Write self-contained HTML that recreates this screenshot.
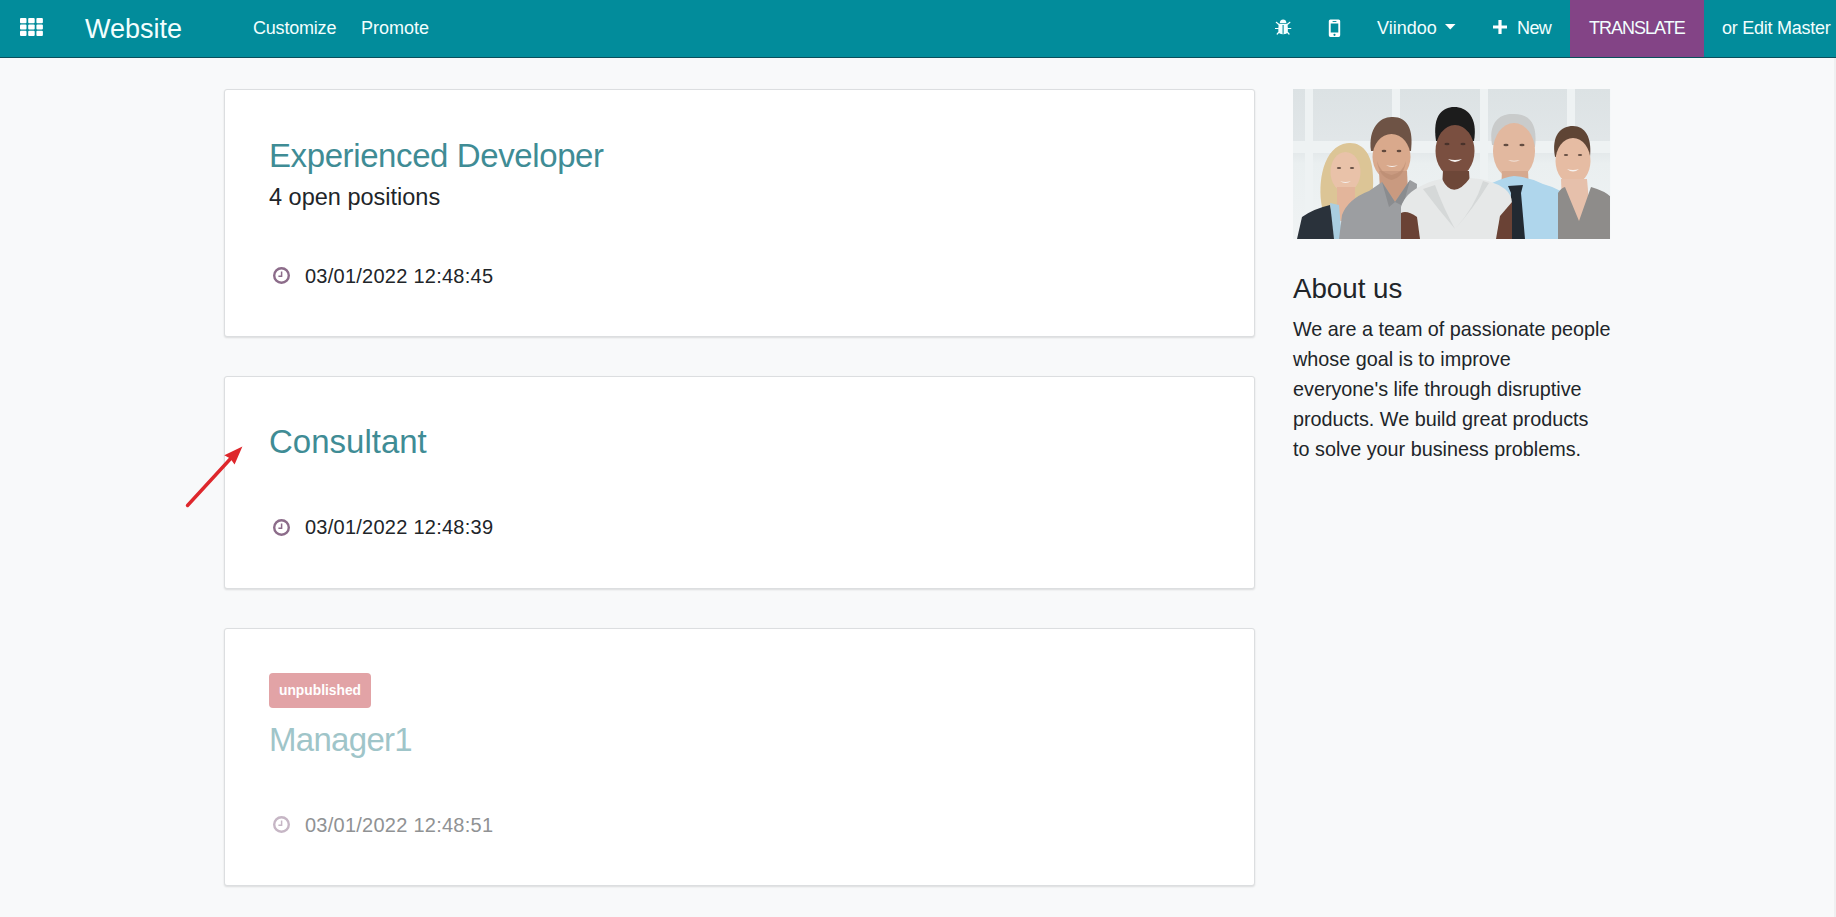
<!DOCTYPE html>
<html>
<head>
<meta charset="utf-8">
<style>
html,body{margin:0;padding:0;}
body{width:1836px;height:917px;overflow:hidden;background:#f8f9fa;font-family:"Liberation Sans",sans-serif;position:relative;}
.a{position:absolute;white-space:nowrap;line-height:1;}
#nav{position:absolute;left:0;top:0;width:1836px;height:57px;background:#028c9b;border-bottom:1px solid #0a4f5c;}
.nt{color:#f2fefe;font-size:18px;}
.card{position:absolute;left:224px;width:1029px;background:#fff;border:1px solid #dcdee0;border-radius:3px;box-shadow:0 1px 2px rgba(0,0,0,.12);}
.title{color:#3f8c95;font-size:33px;}
.date{color:#212529;font-size:20px;letter-spacing:0.25px;}
.para{color:#212529;font-size:19.8px;}
</style>
</head>
<body>
<div id="nav">
  <!-- apps grid -->
  <svg class="a" style="left:20px;top:18px" width="23" height="18" viewBox="0 0 23 18">
    <g fill="#fff">
      <rect x="0" y="0" width="6.5" height="5.2" rx="1"/><rect x="8.2" y="0" width="6.5" height="5.2" rx="1"/><rect x="16.4" y="0" width="6.5" height="5.2" rx="1"/>
      <rect x="0" y="6.4" width="6.5" height="5.2" rx="1"/><rect x="8.2" y="6.4" width="6.5" height="5.2" rx="1"/><rect x="16.4" y="6.4" width="6.5" height="5.2" rx="1"/>
      <rect x="0" y="12.8" width="6.5" height="5.2" rx="1"/><rect x="8.2" y="12.8" width="6.5" height="5.2" rx="1"/><rect x="16.4" y="12.8" width="6.5" height="5.2" rx="1"/>
    </g>
  </svg>
  <div class="a nt" style="left:85px;top:16px;font-size:27px;">Website</div>
  <div class="a nt" style="left:253px;top:19px;letter-spacing:-0.2px;">Customize</div>
  <div class="a nt" style="left:361px;top:19px;">Promote</div>
  <!-- bug -->
  <svg class="a" style="left:1275px;top:15px" width="18" height="22" viewBox="0 0 18 22">
    <path d="M4.8 7.9 Q5.2 4.6 8.1 4.6 Q11 4.6 11.4 7.9 Z" fill="#f4ffff"/>
    <path d="M3.3 8.8 H12.9 Q12.4 11 12.9 13.2 Q13.2 16.5 12 18.2 Q10.5 19.3 8.1 19.3 Q5.7 19.3 4.2 18.2 Q3 16.5 3.3 13.2 Q3.8 11 3.3 8.8 Z" fill="#f4ffff"/>
    <rect x="7.55" y="10" width="1.1" height="8.8" fill="#028c9b"/>
    <g stroke="#f4ffff" stroke-width="1.2" stroke-linecap="round" fill="none">
      <path d="M3.6 9.2 L1.3 7.3 M12.6 9.2 L14.9 7.3 M3.3 13.5 H0.4 M12.9 13.5 H15.8 M4 17 L2.2 19 M12.2 17 L14 19"/>
    </g>
  </svg>
  <!-- mobile -->
  <svg class="a" style="left:1328px;top:19px" width="13" height="19" viewBox="0 0 13 19">
    <path fill="#fff" fill-rule="evenodd" d="M2.4 0.4 H10.6 Q12.2 0.4 12.2 2.1 V16.3 Q12.2 18 10.6 18 H2.4 Q0.8 18 0.8 16.3 V2.1 Q0.8 0.4 2.4 0.4 Z M2.7 4.5 V13.6 H10.3 V4.5 Z"/>
    <rect x="4.6" y="2" width="3.8" height="0.9" fill="#028c9b"/>
    <circle cx="6.5" cy="15.8" r="1.1" fill="#028c9b"/>
  </svg>
  <div class="a nt" style="left:1377px;top:19px;">Viindoo</div>
  <svg class="a" style="left:1445px;top:24px" width="11" height="6" viewBox="0 0 11 6"><path d="M0 0 H10.5 L5.25 5.5 Z" fill="#fff"/></svg>
  <svg class="a" style="left:1493px;top:20px" width="14" height="14" viewBox="0 0 14 14"><path d="M5.4 0 H8.6 V5.4 H14 V8.6 H8.6 V14 H5.4 V8.6 H0 V5.4 H5.4 Z" fill="#fff"/></svg>
  <div class="a nt" style="left:1517px;top:19px;letter-spacing:-0.6px;">New</div>
  <div class="a" style="left:1570px;top:0;width:134px;height:57px;background:#834486;"></div>
  <div class="a nt" style="left:1589px;top:19px;letter-spacing:-1px;">TRANSLATE</div>
  <div class="a nt" style="left:1722px;top:19px;letter-spacing:-0.25px;">or Edit Master</div>
</div>

<!-- card 1 -->
<div class="card" style="top:89px;height:246px;"></div>
<div class="a title" style="left:269px;top:139px;letter-spacing:-0.4px;">Experienced Developer</div>
<div class="a" style="left:269px;top:186px;font-size:23.5px;color:#212529;">4 open positions</div>
<svg class="a" style="left:273px;top:267px" width="17" height="17" viewBox="0 0 17 17"><circle cx="8.5" cy="8.5" r="7.3" fill="none" stroke="#8c6c8a" stroke-width="2.4"/><path d="M8.6 4.4 V9.3 H5.4" fill="none" stroke="#8c6c8a" stroke-width="1.5"/></svg>
<div class="a date" style="left:305px;top:266px;">03/01/2022 12:48:45</div>

<!-- card 2 -->
<div class="card" style="top:376px;height:211px;"></div>
<div class="a title" style="left:269px;top:425px;">Consultant</div>
<svg class="a" style="left:273px;top:519px" width="17" height="17" viewBox="0 0 17 17"><circle cx="8.5" cy="8.5" r="7.3" fill="none" stroke="#8c6c8a" stroke-width="2.4"/><path d="M8.6 4.4 V9.3 H5.4" fill="none" stroke="#8c6c8a" stroke-width="1.5"/></svg>
<div class="a date" style="left:305px;top:517px;">03/01/2022 12:48:39</div>

<!-- arrow -->
<svg class="a" style="left:0;top:0" width="300" height="600" viewBox="0 0 300 600">
  <line x1="187.5" y1="505.5" x2="233" y2="456" stroke="#de272c" stroke-width="3.4" stroke-linecap="round"/>
  <path d="M242.4 446.4 L224.3 455.2 L230.2 458.6 L234.6 464.6 Z" fill="#de272c"/>
</svg>

<!-- card 3 -->
<div class="card" style="top:628px;height:256px;"></div>
<div class="a" style="left:269px;top:673px;width:102px;height:35px;background:#e2a3a6;border-radius:4px;"></div>
<div class="a" style="left:279px;top:684px;font-size:13.8px;font-weight:bold;color:#fff;">unpublished</div>
<div class="a title" style="left:269px;top:723px;color:#9fc5c9;letter-spacing:-0.7px;">Manager1</div>
<svg class="a" style="left:273px;top:816px" width="17" height="17" viewBox="0 0 17 17"><circle cx="8.5" cy="8.5" r="7.3" fill="none" stroke="#c6b6c5" stroke-width="2.4"/><path d="M8.6 4.4 V9.3 H5.4" fill="none" stroke="#c6b6c5" stroke-width="1.5"/></svg>
<div class="a date" style="left:305px;top:815px;color:#909294;">03/01/2022 12:48:51</div>

<!-- sidebar -->
<svg class="a" style="left:1293px;top:89px" width="318" height="150" viewBox="0 0 318 150">
  <defs>
    <linearGradient id="bgg" x1="0" y1="0" x2="0" y2="1">
      <stop offset="0" stop-color="#dce2e4"/>
      <stop offset="0.4" stop-color="#e2e7e9"/>
      <stop offset="0.5" stop-color="#eaeff0"/>
      <stop offset="1" stop-color="#f0f3f4"/>
    </linearGradient>
    <filter id="bl" x="-5%" y="-5%" width="110%" height="110%"><feGaussianBlur stdDeviation="0.6"/></filter>
  </defs>
  <rect width="318" height="150" fill="url(#bgg)"/>
  <g fill="#eef2f3">
    <rect x="12" y="0" width="8" height="150"/>
    <rect x="99" y="0" width="8" height="150"/>
    <rect x="187" y="0" width="8" height="150"/>
    <rect x="274" y="0" width="8" height="150"/>
    <rect x="0" y="52" width="318" height="12"/>
  </g>
  <g filter="url(#bl)">
  <!-- woman 1 blonde -->
  <path d="M30 122 C24 100 28 62 50 55 C68 50 80 64 80 88 C81 104 78 114 70 120 Z" fill="#dcc596"/>
  <ellipse cx="52.5" cy="83" rx="15" ry="20" fill="#e9c2a9"/>
  <path d="M44 98 L62 98 L62 132 L44 132 Z" fill="#e3b59b"/>
  <path d="M4 150 L9 128 Q20 120 37 116 L44 150 Z" fill="#2b323a"/>
  <path d="M37 114 L46 116 L49 150 L41 150 Z" fill="#a9cde0"/>
  <!-- man 2 -->
  <path d="M78 62 C75 38 88 27 100 28 C114 28 121 40 118 62 Z" fill="#6e5344"/>
  <ellipse cx="98.5" cy="68" rx="19" ry="23" fill="#d9a98c"/>
  <path d="M86 82 L114 82 L116 122 L88 122 Z" fill="#c99a80"/>
  <path d="M46 150 L49 126 Q55 110 76 102 L89 93 L102 113 L117 91 L124 95 L122 150 Z" fill="#9c9ea1"/>
  <path d="M89 93 L102 113 L96 118 Z M117 91 L102 113 L110 117 Z" fill="#8a8c8f"/>
  <!-- man 4 (behind woman 3) -->
  <path d="M199 56 C195 32 208 24 221 25 C236 25 245 34 242 58 Z" fill="#c9cbcb"/>
  <ellipse cx="221" cy="62" rx="21" ry="28" fill="#e2b89f"/>
  <path d="M209 82 L235 82 L236 100 L208 100 Z" fill="#d6a98f"/>
  <path d="M196 150 L199 94 Q212 88 221 87 Q236 88 250 95 Q268 100 274 108 L286 150 Z" fill="#afd6ec"/>
  <path d="M215 97 L230 96 L228 104 L232 150 L216 150 L218 104 Z" fill="#232a33"/>
  <!-- woman 5 -->
  <path d="M262 68 C258 46 268 37 280 37 C292 37 299 48 297 68 Z" fill="#5e4436"/>
  <ellipse cx="280" cy="72" rx="17.5" ry="23" fill="#e6bca3"/>
  <path d="M268 90 L294 90 L298 136 L270 136 Z" fill="#e6c0ab"/>
  <path d="M265 150 L265 104 Q268 99 272 98 L286 132 L298 98 Q312 102 318 108 L318 150 Z" fill="#8e8c8a"/>
  <!-- woman 3 center -->
  <path d="M143 52 C139 26 150 18 161 18 C174 18 185 28 181 52 Z" fill="#1d1b1c"/>
  <ellipse cx="162" cy="62" rx="19.5" ry="26" fill="#7a5041"/>
  <path d="M150 82 L176 82 L178 114 L148 114 Z" fill="#6d4638"/>
  <path d="M108 150 L108 118 Q112 104 130 96 Q140 91 149 90 Q160 112 177 89 Q198 90 212 100 Q219 106 219 114 L212 122 L206 150 Z" fill="#e6e8e8"/>
  <path d="M108 124 Q114 121 124 128 L127 150 L108 150 Z" fill="#6a4334"/>
  <path d="M219 113 L219 150 L203 150 L207 127 Z" fill="#6a4334"/>
  <path d="M130 100 Q145 120 162 140 Q150 118 142 96 Z M196 94 Q180 120 162 140 Q182 118 190 92 Z" fill="#d5d8d8"/>
  <g fill="#3a2a24" opacity="0.75">
    <ellipse cx="46" cy="79" rx="2.2" ry="1.1"/><ellipse cx="59" cy="79" rx="2.2" ry="1.1"/>
    <ellipse cx="91" cy="62" rx="2.4" ry="1.2"/><ellipse cx="106" cy="62" rx="2.4" ry="1.2"/>
    <ellipse cx="154" cy="55" rx="2.6" ry="1.3"/><ellipse cx="170" cy="55" rx="2.6" ry="1.3"/>
    <ellipse cx="213" cy="56" rx="2.6" ry="1.2"/><ellipse cx="229" cy="56" rx="2.6" ry="1.2"/>
    <ellipse cx="273" cy="66" rx="2.2" ry="1.1"/><ellipse cx="287" cy="66" rx="2.2" ry="1.1"/>
  </g>
  <g fill="#f6f2ef">
    <path d="M47 92 Q52.5 96 58 92 Q52.5 94 47 92 Z"/>
    <path d="M93 76 Q99 80 105 76 Q99 78 93 76 Z"/>
    <path d="M155 70 Q162 76 169 70 Q162 72 155 70 Z"/>
    <path d="M215 71 Q221 74 227 71 Q221 72.5 215 71 Z"/>
    <path d="M274 80 Q280 85 286 80 Q280 82 274 80 Z"/>
  </g>
  <path d="M84 72 Q86 88 98.5 91 Q111 88 113 72 Q110 84 98.5 86 Q87 84 84 72 Z" fill="#b98a70" opacity="0.6"/>
  </g>
  <rect x="317" y="0" width="1" height="150" fill="#f6f8f9"/>
</svg>

<div class="a" style="left:1293px;top:275px;font-size:27.7px;color:#212529;">About us</div>
<div class="a para" style="left:1293px;top:314px;line-height:30px;white-space:normal;width:340px;">We are a team of passionate people<br>whose goal is to improve<br>everyone's life through disruptive<br>products. We build great products<br>to solve your business problems.</div>
<div class="a" style="left:1834px;top:58px;width:2px;height:859px;background:#eff0f1;"></div>
</body>
</html>
